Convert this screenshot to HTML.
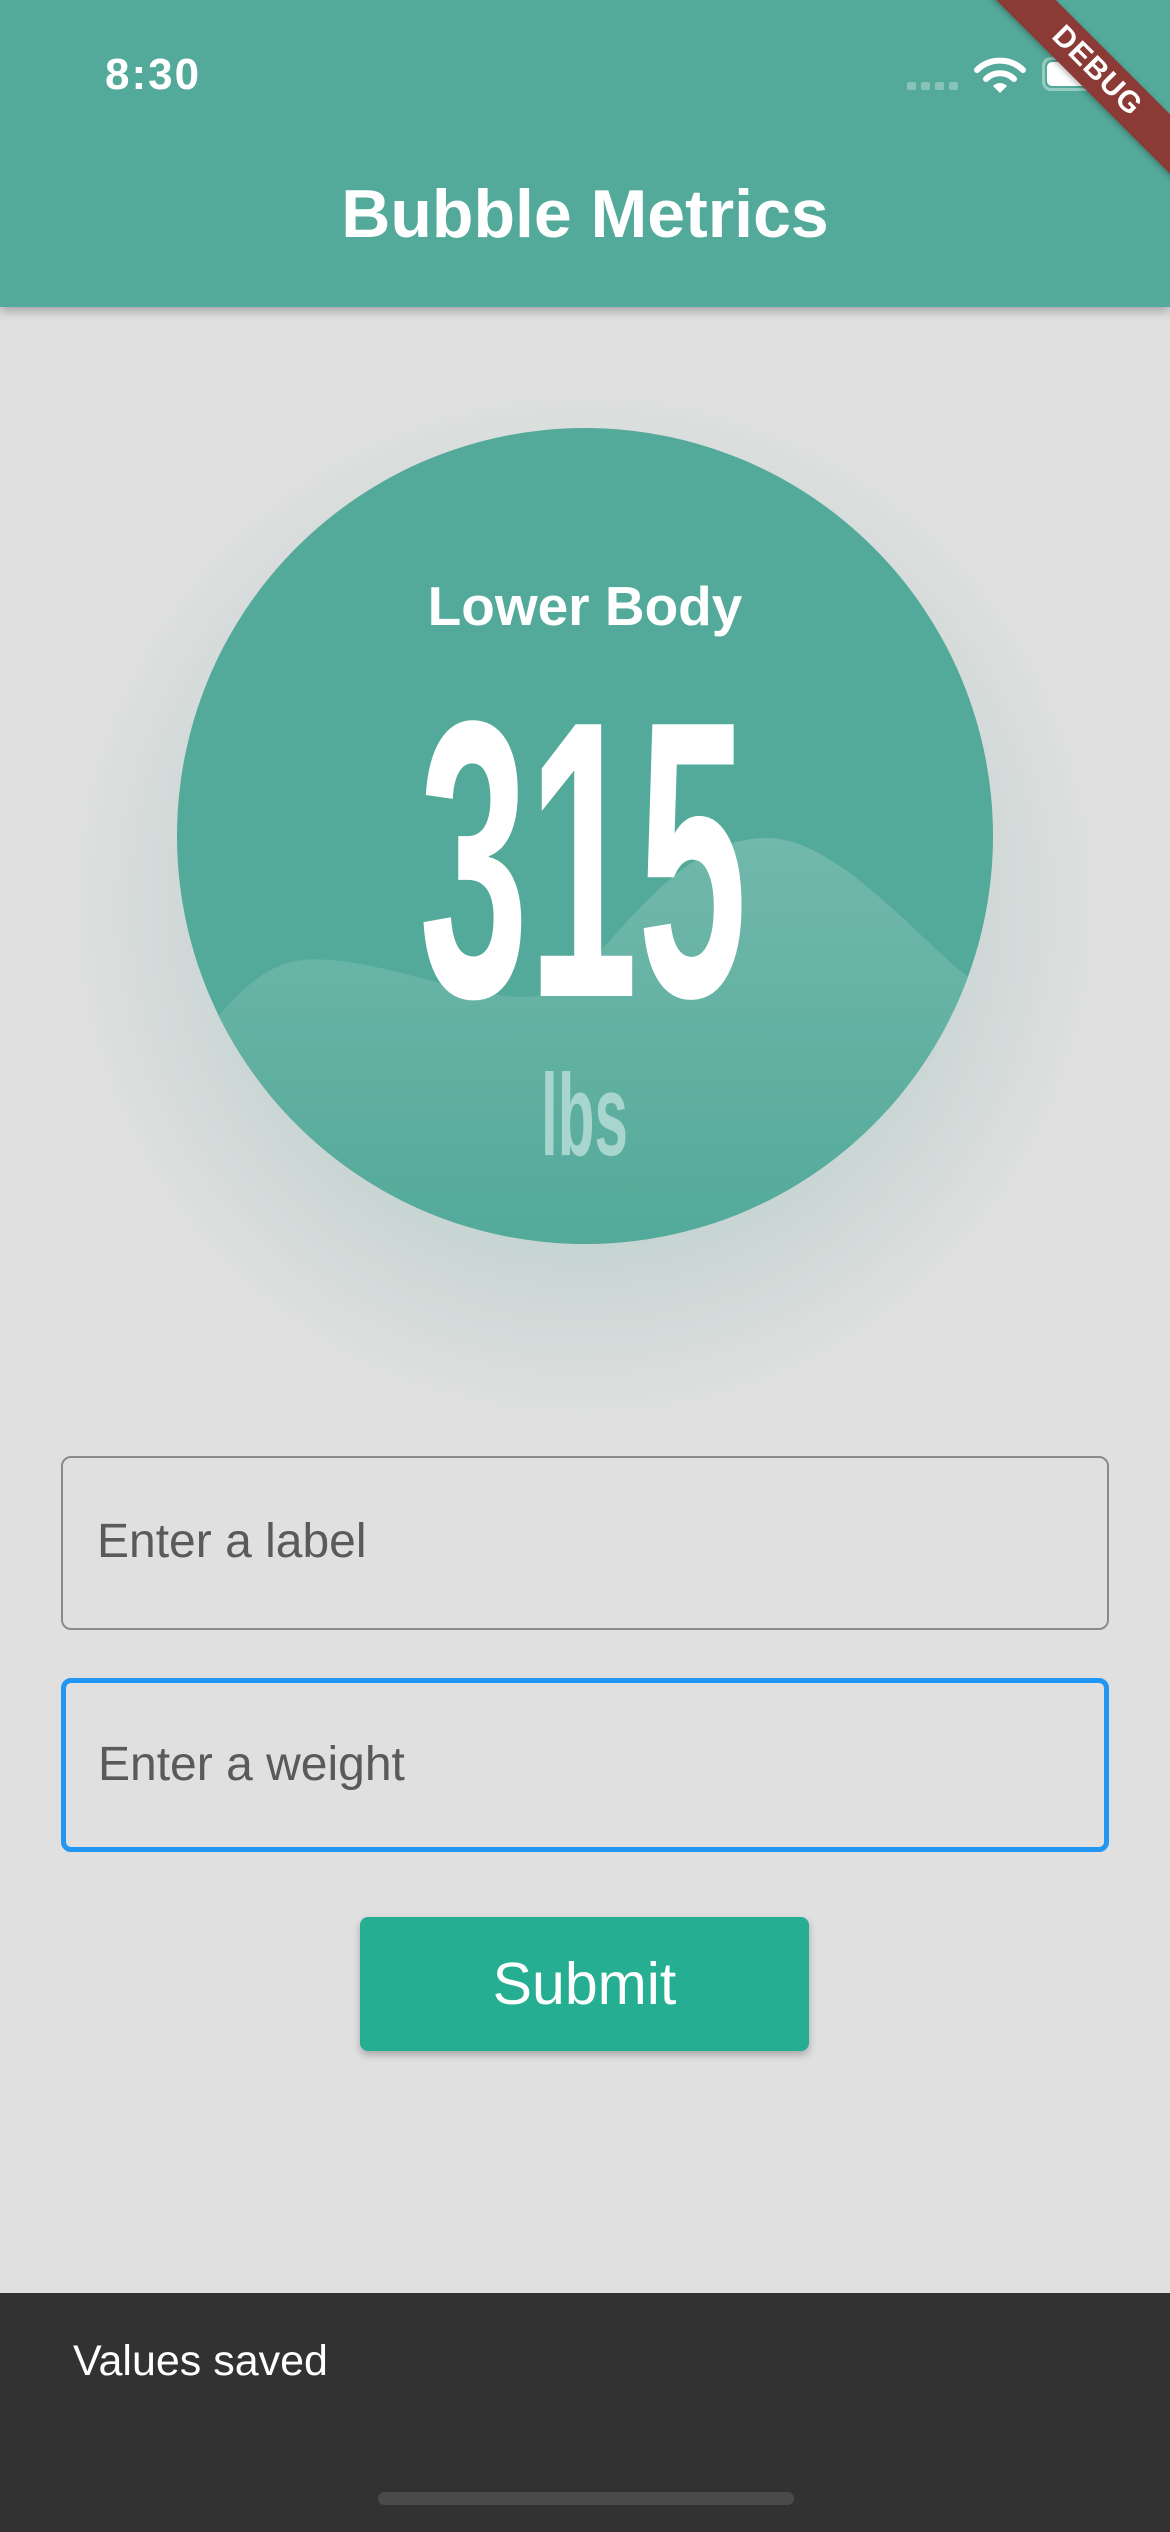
<!DOCTYPE html>
<html><head><meta charset="utf-8"><style>
*{margin:0;padding:0;box-sizing:border-box}
html,body{width:1170px;height:2532px;overflow:hidden;background:#e0e0e0;font-family:"Liberation Sans",sans-serif}
.appbar{position:absolute;left:0;top:0;width:1170px;height:307px;background:#53aa9a;box-shadow:0 4px 10px rgba(0,0,0,.28);z-index:2}
.time{position:absolute;left:105px;top:50px;font-size:44px;font-weight:bold;color:#fff;letter-spacing:2px}
.title{position:absolute;left:0;width:1170px;top:175px;text-align:center;font-size:68px;font-weight:bold;color:#fff}
.glow{position:absolute;left:60px;top:380px;width:1050px;height:1050px;border-radius:50%;background:radial-gradient(circle at 50% 50%,rgba(80,160,145,.35) 0%,rgba(80,160,145,.18) 45%,rgba(224,224,224,0) 70%)}
.circle{position:absolute;left:177px;top:428px;width:816px;height:816px;border-radius:50%;background:#53aa9a;overflow:hidden}
.field{position:absolute;left:61px;width:1048px;border-radius:10px}
.ph{position:absolute;left:34px;font-size:48px;color:#5a5a5a}
.btn{position:absolute;left:360px;top:1917px;width:449px;height:134px;background:#26ae93;border-radius:8px;box-shadow:0 4px 8px rgba(0,0,0,.25);color:#fff;font-size:59px;text-align:center;line-height:134px}
.snack{position:absolute;left:0;top:2293px;width:1170px;height:239px;background:#323232}
.snack span{position:absolute;left:73px;top:44px;color:#fff;font-size:43px}
.home{position:absolute;left:378px;top:2492px;width:416px;height:13px;border-radius:7px;background:#4a4a4a}
.banner{position:absolute;left:947px;top:50px;width:300px;height:42px;background:#8b3a36;transform:rotate(45deg);color:#fff;font-weight:bold;font-size:30px;text-align:center;line-height:42px;letter-spacing:1px;z-index:3;box-shadow:0 2px 6px rgba(0,0,0,.3)}
</style></head><body>
<div class="appbar">
<div class="time">8:30</div>
<div style="position:absolute;left:907px;top:82px">
<span style="position:absolute;left:0;width:9px;height:8px;border-radius:2px;background:rgba(255,255,255,.3)"></span>
<span style="position:absolute;left:14px;width:9px;height:8px;border-radius:2px;background:rgba(255,255,255,.3)"></span>
<span style="position:absolute;left:28px;width:9px;height:8px;border-radius:2px;background:rgba(255,255,255,.3)"></span>
<span style="position:absolute;left:42px;width:9px;height:8px;border-radius:2px;background:rgba(255,255,255,.3)"></span>
</div>
<svg style="position:absolute;left:974px;top:54px" width="52" height="40" viewBox="0 0 52 40">
<path d="M3 16 A33 33 0 0 1 49 16" stroke="#fff" stroke-width="6" fill="none" stroke-linecap="round"/>
<path d="M12 25 A20 20 0 0 1 40 25" stroke="#fff" stroke-width="6" fill="none" stroke-linecap="round"/>
<path d="M19 32 L26 39 L33 32 A10 10 0 0 0 19 32Z" fill="#fff"/></svg>
<div style="position:absolute;left:1042px;top:57px;width:64px;height:34px;border:3px solid rgba(255,255,255,.4);border-radius:9px"></div>
<div style="position:absolute;left:1047px;top:62px;width:54px;height:24px;background:#fff;border-radius:5px"></div>
<div class="title">Bubble Metrics</div>
</div>
<div class="banner">DEBUG</div>
<div class="glow"></div>
<div class="circle">
<svg width="816" height="816" viewBox="0 0 816 816" style="position:absolute;left:0;top:0">
<defs><linearGradient id="g" x1="0" y1="0" x2="0" y2="1"><stop offset="0" stop-color="#72b8ac"/><stop offset="1" stop-color="#53aa9a"/></linearGradient></defs>
<path d="M40 590 C90 530 120 530 152 532 C220 536 300 575 360 568 C420 562 480 410 590 410 C660 410 740 510 790 548 L816 816 L0 816Z" fill="url(#g)"/>
<text x="408" y="197" text-anchor="middle" font-family="Liberation Sans" font-weight="bold" font-size="55" fill="#fff">Lower Body</text>
<text x="242" y="568" textLength="328" lengthAdjust="spacingAndGlyphs" font-family="Liberation Sans" font-weight="bold" font-size="395" fill="#fff">315</text>
<text x="364" y="727" textLength="87" lengthAdjust="spacingAndGlyphs" font-family="Liberation Sans" font-weight="bold" font-size="116" fill="#a8d5cd">lbs</text>
</svg>
</div>
<div class="field" style="top:1456px;height:174px;border:2.5px solid #8a8a8a"><div class="ph" style="top:56px">Enter a label</div></div>
<div class="field" style="top:1678px;height:174px;border:5px solid #2196f3"><div class="ph" style="top:54px;left:32px">Enter a weight</div></div>
<div class="btn">Submit</div>
<div class="snack"><span>Values saved</span></div>
<div class="home"></div>
</body></html>
